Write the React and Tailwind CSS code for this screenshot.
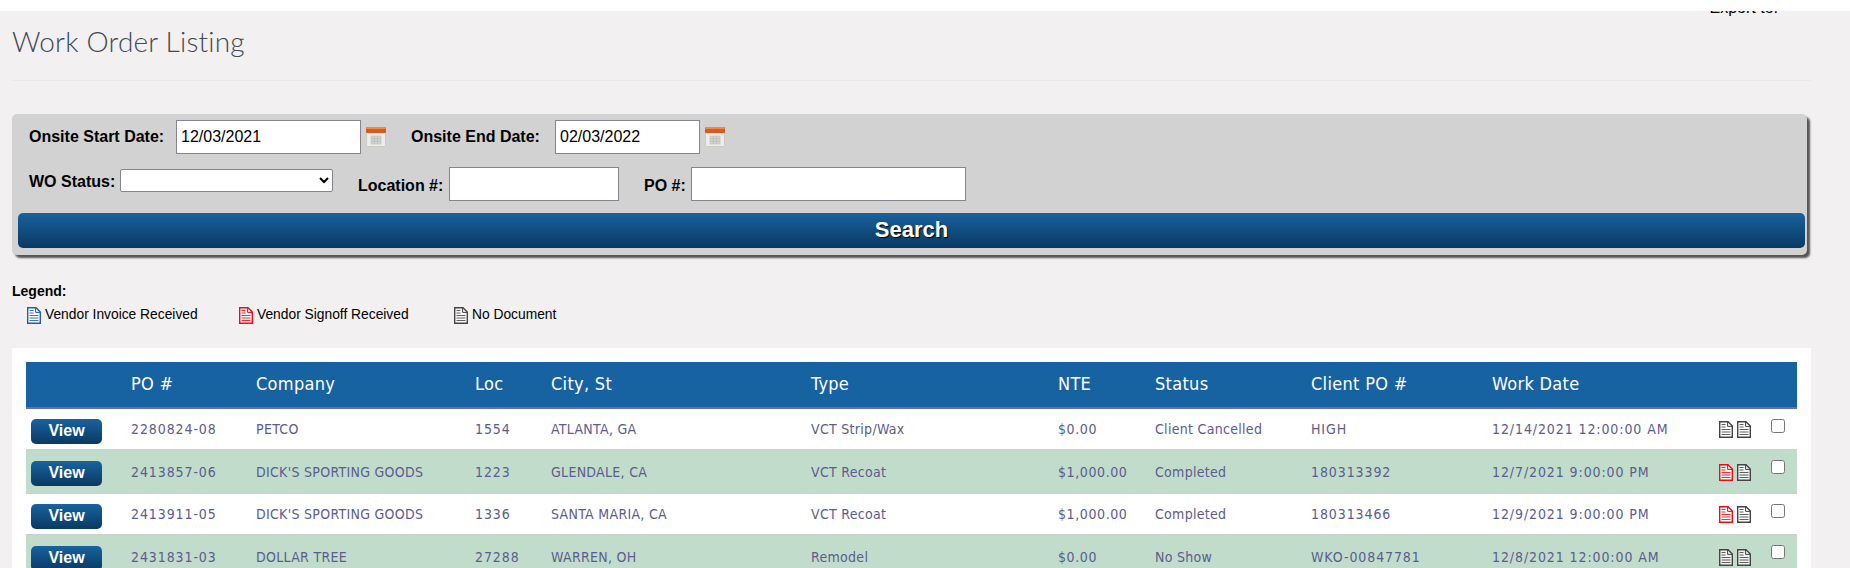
import React from 'react';

const rows = [
    { po: '2280824-08', company: 'PETCO', loc: '1554', city: 'ATLANTA, GA', type: 'VCT Strip/Wax', nte: '$0.00', status: 'Client Cancelled', client: 'HIGH', date: '12/14/2021 12:00:00 AM', first: 'gray', green: false, h: 'h-[41px]', pad: 'pt-[10px]' },
    { po: '2413857-06', company: "DICK'S SPORTING GOODS", loc: '1223', city: 'GLENDALE, CA', type: 'VCT Recoat', nte: '$1,000.00', status: 'Completed', client: '180313392', date: '12/7/2021 9:00:00 PM', first: 'red', green: true, h: 'h-[44px]', pad: 'pt-[11px]' },
    { po: '2413911-05', company: "DICK'S SPORTING GOODS", loc: '1336', city: 'SANTA MARIA, CA', type: 'VCT Recoat', nte: '$1,000.00', status: 'Completed', client: '180313466', date: '12/9/2021 9:00:00 PM', first: 'red', green: false, h: 'h-[41px]', pad: 'pt-[10px]' },
    { po: '2431831-03', company: 'DOLLAR TREE', loc: '27288', city: 'WARREN, OH', type: 'Remodel', nte: '$0.00', status: 'No Show', client: 'WKO-00847781', date: '12/8/2021 12:00:00 AM', first: 'gray', green: true, h: 'h-[44px]', pad: 'pt-[11px]' },
];

const docColors = { blue: '#1f5fa8', red: '#f00a14', gray: '#444444' };

const DocIcon = ({ color = 'gray', className = '' }) => {
    const c = docColors[color];
    return (
        <svg viewBox="0 0 14 17" className={`w-[14px] h-[17px] shrink-0 ${className}`}>
            <path d="M.7.7H9L13.3 5v11.3H.7z" fill="#fff" fillOpacity="0.7" stroke={c} strokeWidth="1.4" />
            <path d="M8.6 1v4.4H13" fill="none" stroke={c} strokeWidth="1" />
            <path d="M2.5 3.5h4M2.5 6h4M2.5 8.5h9M2.5 11h9M2.5 13.5h9" stroke={c} strokeWidth="1.2" strokeOpacity="0.85" />
        </svg>
    );
};

const CalendarIcon = () => (
    <svg viewBox="0 0 20 20" className="w-[20px] h-[20px] shrink-0">
        <rect x="0.5" y="0.5" width="19" height="19" rx="1" fill="#ececea" stroke="#c9c9c6" />
        <rect x="0" y="0" width="20" height="6" rx="1" fill="#d9591c" />
        <rect x="0" y="0" width="20" height="2" rx="1" fill="#ee8a4a" />
        <rect x="5" y="9" width="10" height="8" fill="#d6d6d0" stroke="#bcbcb6" strokeWidth="0.6" />
        <path d="M8.3 9v8M11.6 9v8M5 11.7h10M5 14.4h10" stroke="#b5b5ae" strokeWidth="0.6" />
    </svg>
);

const labelClass = "font-bold text-[16px] text-black whitespace-nowrap";
const inputClass = "bg-white border border-[#85858d] text-[16px] text-black px-1 outline-none";
const cell = "p-0 pt-[2px]";
const digits = "p-0 pt-[2px] tracking-[0.9px]";

const Th = ({ className = '', children }) => (
    <th className={`text-left font-normal text-[18px] tracking-[0.3px] text-white p-0 pb-[3px] ${className}`}>{children}</th>
);

export default function App() {
    return (
        <div className="h-[568px] overflow-hidden bg-[#f2f0f1] font-['Liberation_Sans',Arial,sans-serif]">
            <div className="relative z-10 h-[11px] bg-white" />
            <div className="relative px-3">
                <div className="absolute right-[72px] top-[-12px] text-[16px] leading-[18px] text-black">Export to:</div>

                <h1 className="pt-[14px] h-[70px] border-b border-[#ebe9ea] mr-[27px] font-['Lato',sans-serif] font-light text-[28px] tracking-[0.2px] leading-[32px] text-[#3f4a55]">
                    Work Order Listing
                </h1>

                {/* Search panel */}
                <div className="mt-[33px] w-[1795px] h-[141px] rounded-[5px] bg-[#d2d2d2] shadow-[3px_3px_2px_#555] px-[6px] pt-[6px]">
                    <div className="flex items-center h-[34px] pl-[11px]">
                        <span className={`${labelClass} w-[147px]`}>Onsite Start Date:</span>
                        <input className={`${inputClass} w-[185px] h-[34px]`} defaultValue="12/03/2021" />
                        <span className="ml-[5px]"><CalendarIcon /></span>
                        <span className={`${labelClass} ml-[25px] w-[144px]`}>Onsite End Date:</span>
                        <input className={`${inputClass} w-[145px] h-[34px]`} defaultValue="02/03/2022" />
                        <span className="ml-[5px]"><CalendarIcon /></span>
                    </div>
                    <div className="flex items-start h-[34px] mt-[13px] pl-[11px]">
                        <span className={`${labelClass} w-[91px] mt-[3px]`}>WO Status:</span>
                        <select className="w-[213px] h-[23px] mt-[2px] bg-white border border-[#85858d] rounded-[2px] text-[14px]" />
                        <span className={`${labelClass} ml-[25px] w-[91px] mt-[7px]`}>Location #:</span>
                        <input className={`${inputClass} w-[170px] h-[34px]`} />
                        <span className={`${labelClass} ml-[25px] w-[47px] mt-[7px]`}>PO #:</span>
                        <input className={`${inputClass} w-[275px] h-[34px]`} />
                    </div>
                    <button className="block w-[1787px] h-[35px] mt-[12px] pb-[2px] rounded-[5px] bg-gradient-to-b from-[#17639f] to-[#0b3962] text-white font-bold text-[22px] [text-shadow:1px_1px_1px_#000]">
                        Search
                    </button>
                </div>

                {/* Legend */}
                <div className="mt-[28px] font-bold text-[14px] leading-[16px] text-black">Legend:</div>
                <div className="flex items-center h-[17px] mt-[8px] pl-[15px] text-[13.8px] text-black">
                    <DocIcon color="blue" />
                    <span className="ml-[4px] w-[194px]">Vendor Invoice Received</span>
                    <DocIcon color="red" />
                    <span className="ml-[4px] w-[197px]">Vendor Signoff Received</span>
                    <DocIcon color="gray" />
                    <span className="ml-[4px]">No Document</span>
                </div>

                {/* Results */}
                <div className="mt-[24px] w-[1799px] bg-white px-[14px] pt-[14px] pb-4">
                    <table className="w-[1771px] table-fixed border-collapse font-['DejaVu_Sans_Condensed','DejaVu_Sans',sans-serif]">
                        <thead>
                            <tr className="h-[46px] bg-[#1763a2] border-b-2 border-[#5f73ab]">
                                <Th className="w-[105px]" />
                                <Th className="w-[125px]">PO #</Th>
                                <Th className="w-[219px]">Company</Th>
                                <Th className="w-[76px]">Loc</Th>
                                <Th className="w-[260px]">City, St</Th>
                                <Th className="w-[247px]">Type</Th>
                                <Th className="w-[97px]">NTE</Th>
                                <Th className="w-[156px]">Status</Th>
                                <Th className="w-[181px]">Client PO #</Th>
                                <Th className="w-[227px]">Work Date</Th>
                                <Th className="w-[52px]" />
                                <Th />
                            </tr>
                        </thead>
                        <tbody>
                            {rows.map((row) => (
                                <tr key={row.po} className={`${row.h} ${row.green ? 'bg-[#c1dccb]' : 'bg-white'} border-b border-[#cfcfcf] text-[14px] tracking-[0.3px] text-[#5c5c8e]`}>
                                    <td className={`p-0 pl-[5px] align-top ${row.pad}`}>
                                        <button className="block w-[71px] h-[25px] pb-[3px] rounded-[5px] bg-gradient-to-b from-[#17639f] to-[#0b3962] text-white font-bold text-[16px] font-['Liberation_Sans',sans-serif] tracking-normal">
                                            View
                                        </button>
                                    </td>
                                    <td className={digits}>{row.po}</td>
                                    <td className={cell}>{row.company}</td>
                                    <td className={digits}>{row.loc}</td>
                                    <td className={cell}>{row.city}</td>
                                    <td className={cell}>{row.type}</td>
                                    <td className={`${cell} tracking-[0.6px]`}>{row.nte}</td>
                                    <td className={cell}>{row.status}</td>
                                    <td className={digits}>{row.client}</td>
                                    <td className={digits}>{row.date}</td>
                                    <td className="p-0 pt-[2px]">
                                        <div className="flex gap-[4px]">
                                            <DocIcon color={row.first} />
                                            <DocIcon color="gray" />
                                        </div>
                                    </td>
                                    <td className="p-0 align-top pt-[10px]">
                                        <input type="checkbox" className="block w-[14px] h-[14px] m-0" />
                                    </td>
                                </tr>
                            ))}
                        </tbody>
                    </table>
                </div>
            </div>
        </div>
    );
}
